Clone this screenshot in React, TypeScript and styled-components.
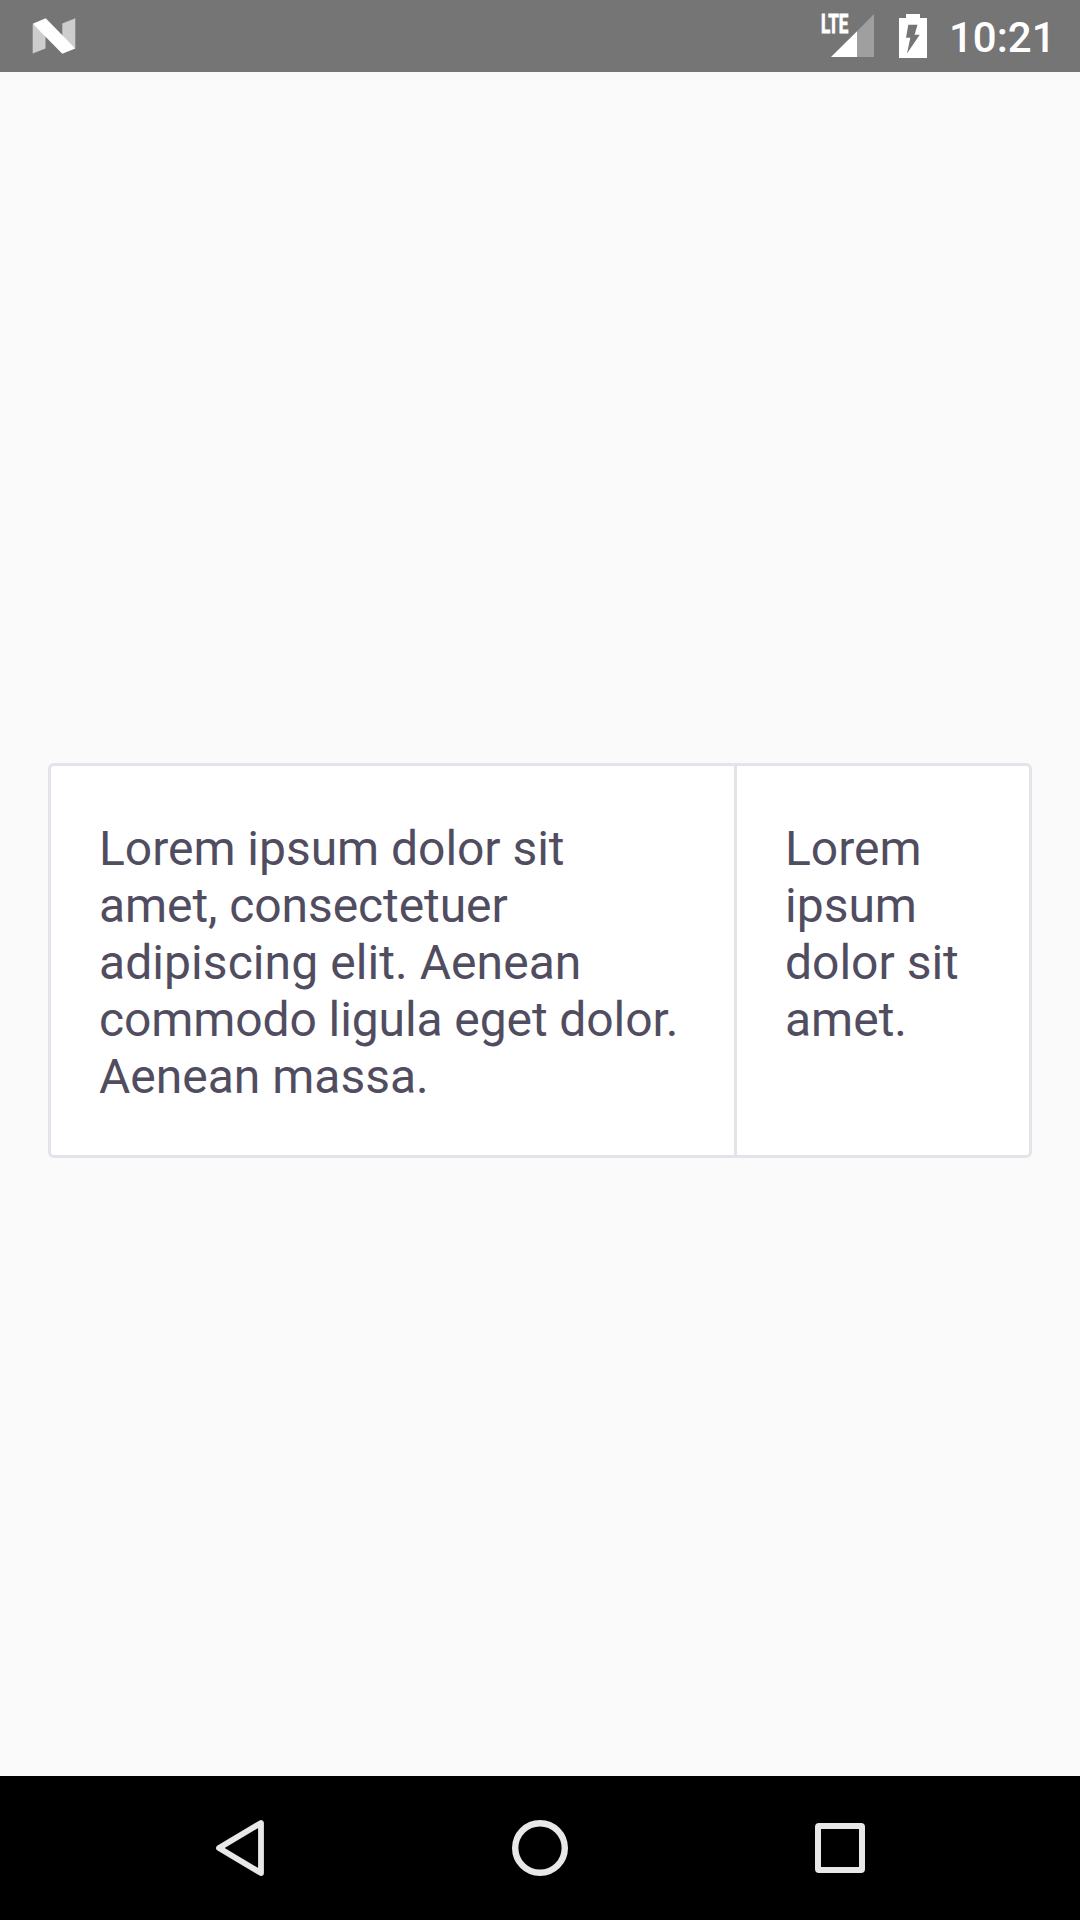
import React from "react";
import styled, { createGlobalStyle } from "styled-components";

const GlobalStyle = createGlobalStyle`
  html, body {
    margin: 0;
    background: #fafafa;
  }
  *, *::before, *::after {
    box-sizing: border-box;
  }
`;

const Screen = styled.div`
  display: flex;
  flex-direction: column;
  width: 1080px;
  height: 1920px;
  background: #fafafa;
  font-family: Roboto, "Liberation Sans", sans-serif;
`;

const StatusBar = styled.header`
  display: flex;
  align-items: center;
  flex: 0 0 72px;
  height: 72px;
  padding: 0 24px 0 32px;
  background: #757575;
`;

const StatusIcon = styled.svg<{ $gap?: number }>`
  display: block;
  flex: none;
  margin-left: ${({ $gap = 0 }) => $gap}px;
`;

const Spacer = styled.div`
  flex: 1;
`;

const Clock = styled.time`
  width: 107px;
  height: 72px;
  margin-left: 22px;
  padding-top: 3px;
  color: #fff;
  font-size: 42px;
  font-weight: 500;
  line-height: 70px;
  white-space: nowrap;
`;

const NetworkLabel = styled.text`
  fill: #fff;
  stroke: #fff;
  stroke-width: 0.9px;
  font-family: Roboto, sans-serif;
  font-size: 25.5px;
  font-weight: 700;
`;

const Content = styled.main`
  flex: 1;
  padding: 691px 48px 0;
`;

const Card = styled.section`
  display: flex;
  height: 395px;
  border: 3px solid #e4e3e9;
  border-radius: 6px;
  background: #fff;
`;

const Column = styled.div<{ $width: number }>`
  flex: 0 0 ${({ $width }) => $width}px;
  padding: 54px 48px 0;

  & + & {
    border-left: 3px solid #e4e3e9;
  }
`;

const Paragraph = styled.p`
  margin: 0;
  color: #514d61;
  font-size: 48px;
  line-height: 57px;
`;

const Line = styled.span<{ $tracking?: number }>`
  display: block;
  letter-spacing: ${({ $tracking = 0 }) => $tracking}px;
  white-space: nowrap;
`;

const NavBar = styled.nav`
  display: flex;
  flex: 0 0 144px;
  justify-content: center;
  background: #000;
`;

const NavButton = styled.button`
  display: flex;
  align-items: center;
  justify-content: center;
  width: 300px;
  padding: 0;
  border: 0;
  background: none;
`;

const NavIcon = styled.svg`
  display: block;
  width: 72px;
  height: 72px;
  fill: none;
  stroke: #e8e8e8;
  stroke-linejoin: round;
`;

export default function App() {
  return (
    <Screen>
      <GlobalStyle />
      <StatusBar>
        <StatusIcon width="44" height="72" viewBox="32 0 44 72">
          <path d="M32.7 24V53.5L45.5 48.5V34ZM62.3 23.4L75.3 18.3V48.5L62.3 38Z" fill="#cdcdcd" />
          <path d="M32.7 23.7L45.7 18.3L75.3 48.4L62.3 53.7Z" fill="#fff" />
        </StatusIcon>
        <Spacer />
        <StatusIcon width="54" height="72" viewBox="820 0 54 72">
          <path d="M857 31.2L874 14V57H857Z" fill="#9f9f9f" />
          <path d="M831 57L857 31.2V57Z" fill="#fff" />
          <NetworkLabel x="820.9" y="33.4" textLength="27.4" lengthAdjust="spacingAndGlyphs">
            LTE
          </NetworkLabel>
        </StatusIcon>
        <StatusIcon $gap={25} width="28" height="72" viewBox="899 0 28 72">
          <path d="M906 14H920V18H927V58H899V18H906Z" fill="#fff" />
          <path d="M908.3 24.7H917.5L914.6 34.7H919.7L907 53.5L910.3 37.7H906Z" fill="#757575" />
        </StatusIcon>
        <Clock>10:21</Clock>
      </StatusBar>
      <Content>
        <Card>
          <Column $width={683}>
            <Paragraph>
              <Line $tracking={-0.03}>Lorem ipsum dolor sit </Line>
              <Line $tracking={-0.08}>amet, consectetuer </Line>
              <Line $tracking={0.07}>adipiscing elit. Aenean </Line>
              <Line $tracking={-0.1}>commodo ligula eget dolor. </Line>
              <Line>Aenean massa.</Line>
            </Paragraph>
          </Column>
          <Column $width={295}>
            <Paragraph>Lorem ipsum dolor sit amet.</Paragraph>
          </Column>
        </Card>
      </Content>
      <NavBar>
        <NavButton aria-label="Back">
          <NavIcon viewBox="0 0 72 72">
            <path d="M15 36L57 11V61Z" strokeWidth="5.8" />
          </NavIcon>
        </NavButton>
        <NavButton aria-label="Home">
          <NavIcon viewBox="0 0 72 72">
            <circle cx="36" cy="36" r="24.8" strokeWidth="6.4" />
          </NavIcon>
        </NavButton>
        <NavButton aria-label="Recent apps">
          <NavIcon viewBox="0 0 72 72">
            <rect x="14" y="14" width="44" height="44" rx="1" strokeWidth="6" />
          </NavIcon>
        </NavButton>
      </NavBar>
    </Screen>
  );
}
